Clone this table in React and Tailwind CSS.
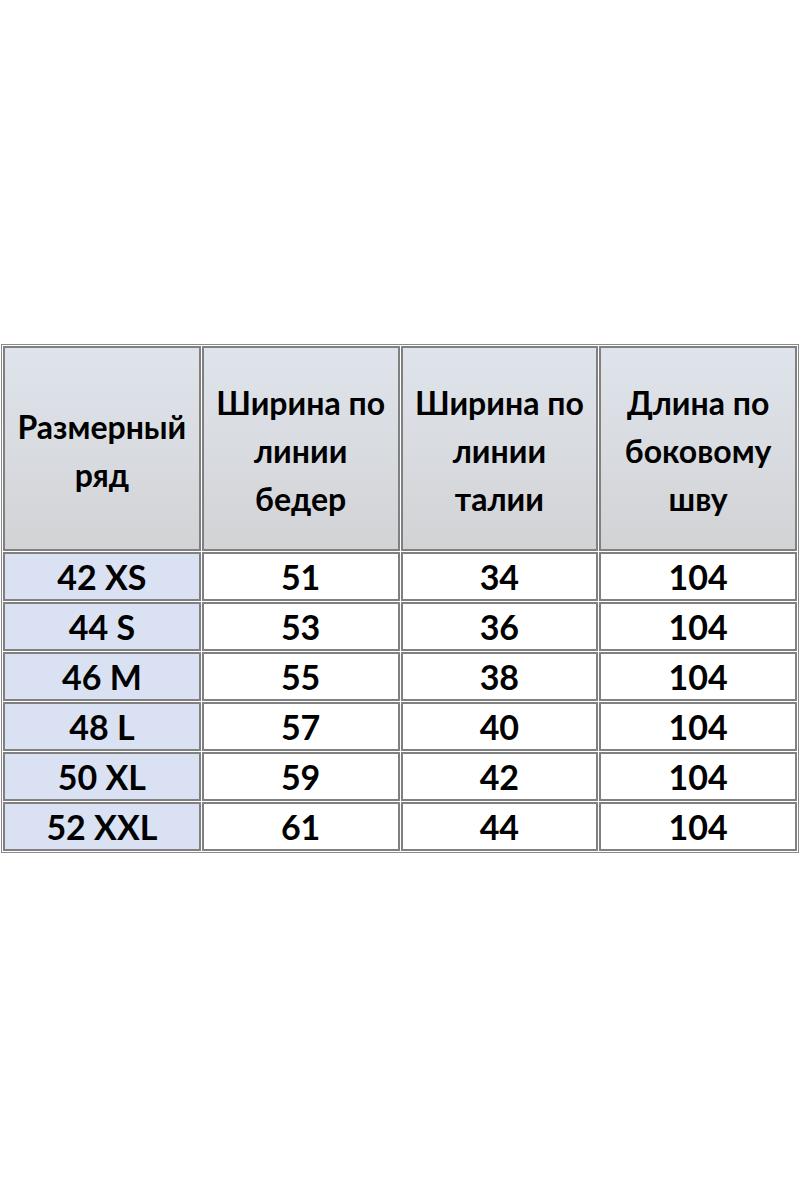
import React from "react";

const rows = [
  ["42 XS", "51", "34", "104"],
  ["44 S", "53", "36", "104"],
  ["46 M", "55", "38", "104"],
  ["48 L", "57", "40", "104"],
  ["50 XL", "59", "42", "104"],
  ["52 XXL", "61", "44", "104"],
];

const headers = [
  ["Размерный", "ряд"],
  ["Ширина по", "линии", "бедер"],
  ["Ширина по", "линии", "талии"],
  ["Длина по", "боковому", "шву"],
];

export default function App() {
  return (
    <div
      className="w-[800px] h-[1200px] bg-white pt-[344px] pl-px"
      style={{ fontFamily: "Lato, 'Open Sans', sans-serif" }}
    >
      <div className="w-[798px] border border-[#8a8a8a] p-px grid grid-cols-4 gap-px bg-white">
        {headers.map((h, i) => (
          <div
            key={i}
            className="h-[205px] border-2 border-[#808080] bg-gradient-to-b from-[#dfe4ec] to-[#d2d3d5] flex flex-col items-center justify-center pt-[4px] text-[32px] leading-[48px] font-bold text-black"
          >
            {h.map((t, j) => (
              <div key={j}>{t}</div>
            ))}
          </div>
        ))}
        {rows.map((r, i) =>
          r.map((c, j) => (
            <div
              key={i + "-" + j}
              className={
                "h-[49px] border-2 border-[#808080] flex items-center justify-center text-[34px] font-bold text-black " +
                (j === 0 ? "bg-[#d9e1f2]" : "bg-white")
              }
            >
              {c}
            </div>
          ))
        )}
      </div>
    </div>
  );
}
